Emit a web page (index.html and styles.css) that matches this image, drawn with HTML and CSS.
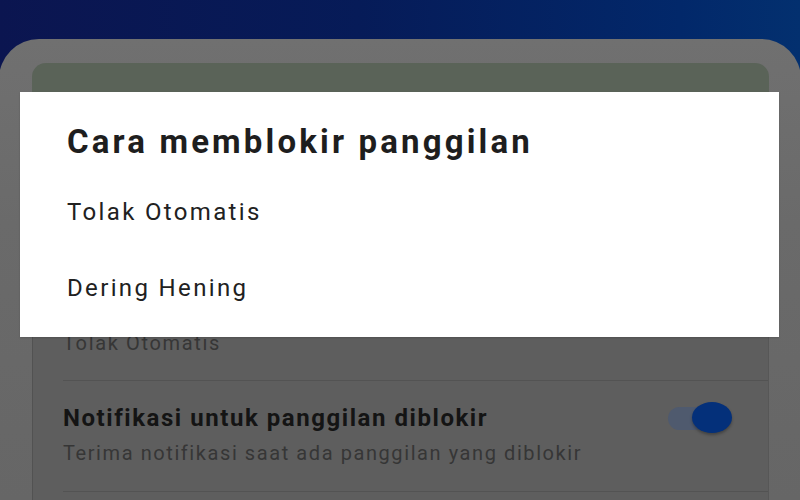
FILE: index.html
```html
<!DOCTYPE html>
<html lang="id">
<head>
<meta charset="utf-8">
<title>Cara memblokir panggilan</title>
<link rel="stylesheet" href="styles.css">
</head>
<body>
  <div class="phone">
    <div class="screen">
      <div class="header"></div>
      <div class="card">
        <div class="row row-value">
          <span class="value">Tolak Otomatis</span>
        </div>
        <div class="row row-toggle">
          <div class="texts">
            <div class="row-title">Notifikasi untuk panggilan diblokir</div>
            <div class="row-sub">Terima notifikasi saat ada panggilan yang diblokir</div>
          </div>
          <div class="switch">
            <span class="track"></span>
            <span class="thumb"></span>
          </div>
        </div>
      </div>
    </div>
  </div>

  <div class="dialog">
    <h1 class="dialog-title">Cara memblokir panggilan</h1>
    <div class="option">Tolak Otomatis</div>
    <div class="option">Dering Hening</div>
  </div>
</body>
</html>
```
FILE: styles.css
```css
html, body {
  margin: 0;
  padding: 0;
}

body {
  width: 800px;
  height: 500px;
  overflow: hidden;
  position: relative;
  background: linear-gradient(90deg, #0b1550 0%, #061b58 45%, #02286a 85%, #03306f 100%);
  font-family: Roboto, "Noto Sans", "Liberation Sans", sans-serif;
}

.phone {
  margin: 39px -1px 0 -1px;
  height: 461px;
  box-sizing: border-box;
  padding: 24px 32px 0 33px;
  background: linear-gradient(180deg, #707070 0%, #6a6a6a 40%, #666 100%);
  border-radius: 40px 40px 0 0;
}

.screen {
  height: 100%;
  display: flex;
  flex-direction: column;
}

.header {
  height: 29px;
  flex: none;
  background: #5a6358;
  border-radius: 14px 14px 0 0;
}

.card {
  flex: 1;
  background: #5e5e5e;
  border-left: 1px solid #525252;
  border-right: 1px solid #575757;
  padding-left: 30px;
}

.row {
  display: flex;
  box-sizing: border-box;
}

.row-value {
  height: 288px;
  align-items: flex-end;
  padding-bottom: 25px;
}

.value {
  font-size: 20px;
  line-height: 24px;
  letter-spacing: 1.65px;
  color: #363636;
}

.row-toggle {
  border-top: 1px solid #535353;
  border-bottom: 1px solid #535353;
  height: 112px;
  padding: 22px 36px 0 0;
  align-items: flex-start;
  justify-content: space-between;
}

.row-title {
  font-size: 24px;
  line-height: 30px;
  font-weight: 700;
  letter-spacing: 1.55px;
  color: #141414;
}

.row-sub {
  margin-top: 7px;
  font-size: 20px;
  line-height: 26px;
  letter-spacing: 1.58px;
  color: #363636;
}

.switch {
  position: relative;
  width: 64px;
  height: 32px;
}

.track {
  position: absolute;
  left: 0;
  top: 4px;
  width: 50px;
  height: 23px;
  border-radius: 12px;
  background: #4f5a6e;
}

.thumb {
  position: absolute;
  right: 0;
  top: -1px;
  width: 40px;
  height: 31px;
  border-radius: 50%;
  background: #04307a;
  box-shadow: 0 2px 3px rgba(0, 0, 0, 0.3);
}

.dialog {
  position: absolute;
  left: 20px;
  top: 92px;
  width: 759px;
  height: 245px;
  box-sizing: border-box;
  background: #fff;
  padding: 30px 47px 0 47px;
  box-shadow: 0 1px 2px rgba(0, 0, 0, 0.15);
}

.dialog-title {
  margin: 0 0 35px 0;
  font-size: 33px;
  line-height: 40px;
  font-weight: 700;
  letter-spacing: 3.15px;
  color: #1e1e1e;
}

.option {
  font-size: 24px;
  line-height: 30px;
  letter-spacing: 2.35px;
  color: #212121;
  margin-bottom: 46px;
}
```
